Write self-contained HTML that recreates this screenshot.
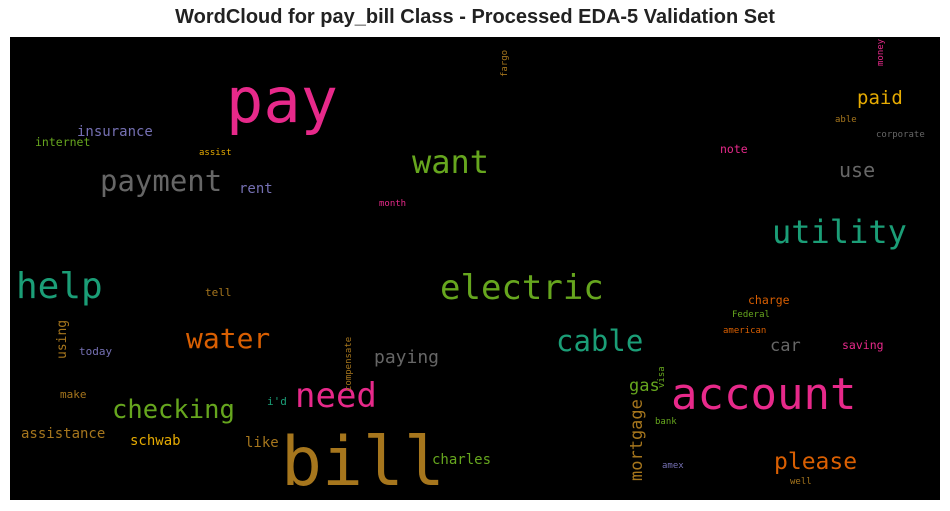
<!DOCTYPE html>
<html><head><meta charset="utf-8"><style>
body{margin:0;width:950px;height:511px;background:#fff;position:relative;overflow:hidden;}
.t{position:absolute;left:0;width:950px;top:6px;text-align:center;font:bold 20px "Liberation Sans",sans-serif;color:#222;}
.bx{position:absolute;left:10px;top:37px;width:930px;height:463px;background:#000;}
span{position:absolute;font-family:"DejaVu Sans Mono",monospace;line-height:1;white-space:nowrap;}
.v{transform-origin:0 0;transform:rotate(-90deg);}
</style></head><body>
<div class="t">WordCloud for pay_bill Class - Processed EDA-5 Validation Set</div>
<div class="bx"></div>
<div id="w">
<span style="left:226px;top:70px;font-size:62px;color:#e7298a">pay</span>
<span style="left:281px;top:429px;font-size:68px;color:#a6761d">bill</span>
<span style="left:671px;top:373px;font-size:44px;color:#e7298a">account</span>
<span style="left:440px;top:271px;font-size:34px;color:#66a61e">electric</span>
<span style="left:772px;top:216px;font-size:32px;color:#1b9e77">utility</span>
<span style="left:16px;top:269px;font-size:36px;color:#1b9e77">help</span>
<span style="left:412px;top:146px;font-size:32px;color:#66a61e">want</span>
<span style="left:100px;top:167px;font-size:29px;color:#666666">payment</span>
<span style="left:556px;top:327px;font-size:29px;color:#1b9e77">cable</span>
<span style="left:295px;top:379px;font-size:34px;color:#e7298a">need</span>
<span style="left:112px;top:398px;font-size:25.5px;color:#66a61e">checking</span>
<span style="left:186px;top:325px;font-size:28px;color:#d95f02">water</span>
<span style="left:774px;top:451px;font-size:23px;color:#d95f02">please</span>
<span style="left:857px;top:89px;font-size:19px;color:#e6ab02">paid</span>
<span style="left:839px;top:160px;font-size:20px;color:#666666">use</span>
<span class="v" style="left:629px;top:481px;font-size:17px;color:#a6761d">mortgage</span>
<span style="left:629px;top:378px;font-size:17px;color:#66a61e">gas</span>
<span style="left:770px;top:338px;font-size:17px;color:#666666">car</span>
<span style="left:374px;top:349px;font-size:18px;color:#666666">paying</span>
<span style="left:432px;top:453px;font-size:14px;color:#66a61e">charles</span>
<span style="left:130px;top:434px;font-size:14px;color:#e6ab02">schwab</span>
<span style="left:245px;top:436px;font-size:14px;color:#a6761d">like</span>
<span style="left:21px;top:427px;font-size:14px;color:#a6761d">assistance</span>
<span style="left:77px;top:125px;font-size:14px;color:#7570b3">insurance</span>
<span style="left:35px;top:137px;font-size:11.5px;color:#66a61e">internet</span>
<span style="left:239px;top:182px;font-size:14px;color:#7570b3">rent</span>
<span class="v" style="left:56px;top:359px;font-size:13px;color:#a6761d">using</span>
<span style="left:79px;top:346px;font-size:11px;color:#7570b3">today</span>
<span style="left:60px;top:389px;font-size:11px;color:#a6761d">make</span>
<span style="left:205px;top:287px;font-size:11px;color:#a6761d">tell</span>
<span style="left:199px;top:149px;font-size:9px;color:#e6ab02">assist</span>
<span style="left:379px;top:200px;font-size:9px;color:#e7298a">month</span>
<span style="left:267px;top:396px;font-size:11px;color:#1b9e77">i'd</span>
<span class="v" style="left:345px;top:391px;font-size:9px;color:#a6761d">compensate</span>
<span style="left:842px;top:340px;font-size:11.5px;color:#e7298a">saving</span>
<span style="left:748px;top:295px;font-size:11.5px;color:#d95f02">charge</span>
<span style="left:732px;top:311px;font-size:9px;color:#66a61e">Federal</span>
<span style="left:723px;top:327px;font-size:9px;color:#d95f02">american</span>
<span class="v" style="left:658px;top:388px;font-size:9px;color:#66a61e">visa</span>
<span style="left:655px;top:418px;font-size:9px;color:#66a61e">bank</span>
<span style="left:662px;top:462px;font-size:9px;color:#7570b3">amex</span>
<span style="left:790px;top:478px;font-size:9px;color:#a6761d">well</span>
<span style="left:720px;top:144px;font-size:11.5px;color:#e7298a">note</span>
<span style="left:835px;top:116px;font-size:9px;color:#a6761d">able</span>
<span style="left:876px;top:131px;font-size:9px;color:#666666">corporate</span>
<span class="v" style="left:877px;top:66px;font-size:9px;color:#e7298a">money</span>
<span class="v" style="left:501px;top:77px;font-size:9px;color:#a6761d">fargo</span>
</div>
</body></html>
